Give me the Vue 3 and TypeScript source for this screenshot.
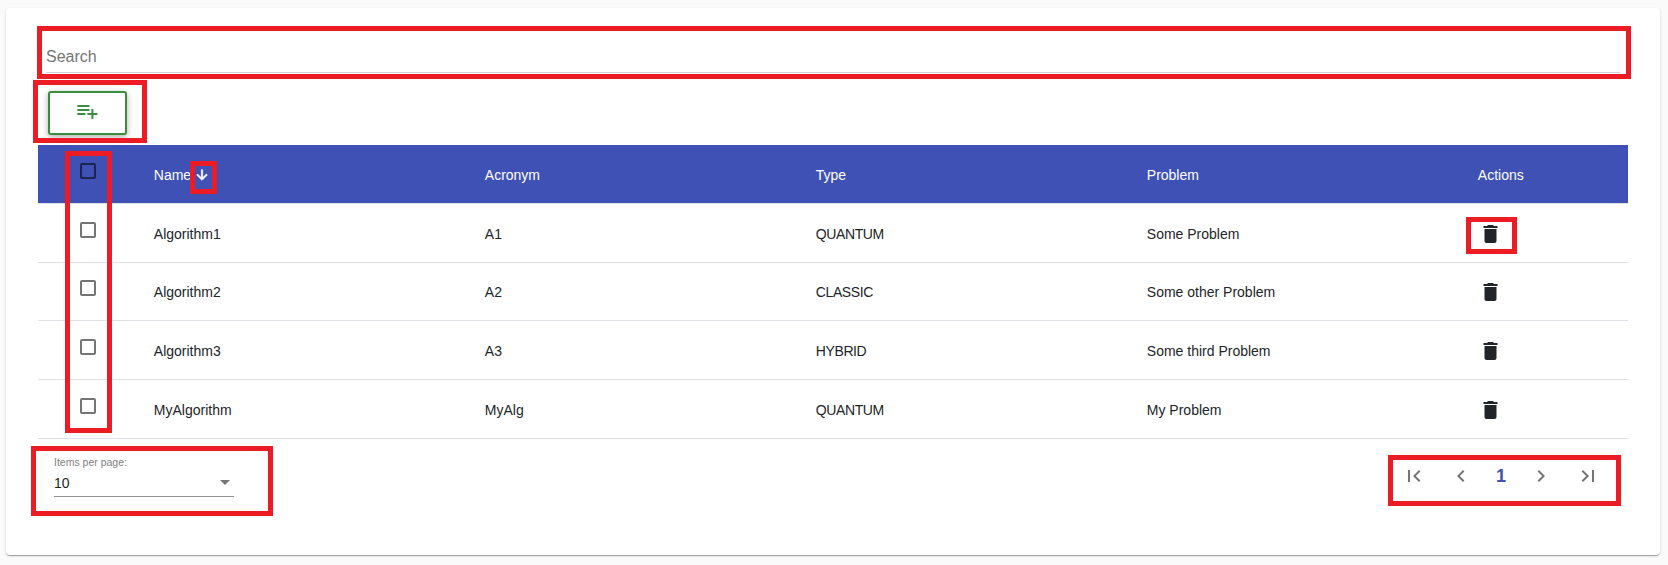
<script setup lang="ts">
import { ref } from 'vue'

interface Algorithm {
  name: string
  acronym: string
  type: string
  problem: string
}

const search = ref('')
const algorithms: Algorithm[] = [
  { name: 'Algorithm1', acronym: 'A1', type: 'QUANTUM', problem: 'Some Problem' },
  { name: 'Algorithm2', acronym: 'A2', type: 'CLASSIC', problem: 'Some other Problem' },
  { name: 'Algorithm3', acronym: 'A3', type: 'HYBRID', problem: 'Some third Problem' },
  { name: 'MyAlgorithm', acronym: 'MyAlg', type: 'QUANTUM', problem: 'My Problem' },
]
const marks = ['search', 'add', 'select', 'sort', 'delete', 'size', 'pages']
</script>

<template>
  <main class="page">
    <section class="card">
      <div class="search">
        <input v-model="search" type="text" placeholder="Search" />
      </div>

      <div class="toolbar">
        <button class="add" type="button" aria-label="Add">
          <svg class="icon" viewBox="-0.4 0 24 24"><path d="M14 10H2v2h12v-2zm0-4H2v2h12V6zm4 8v-4h-2v4h-4v2h4v4h2v-4h4v-2h-4zM2 16h8v-2H2v2z" /></svg>
        </button>
      </div>

      <div class="table">
        <div class="row head">
          <div class="check"><span class="box" /></div>
          <div class="cell">
            Name
            <svg class="sort" viewBox="0 0 24 24"><path d="M20 12l-1.41-1.41L13 16.17V4h-2v12.17l-5.58-5.59L4 12l8 8 8-8z" /></svg>
          </div>
          <div class="cell">Acronym</div>
          <div class="cell">Type</div>
          <div class="cell">Problem</div>
          <div class="cell">Actions</div>
        </div>
        <div v-for="item in algorithms" :key="item.name" class="row">
          <div class="check"><span class="box" /></div>
          <div class="cell">{{ item.name }}</div>
          <div class="cell">{{ item.acronym }}</div>
          <div class="cell type">{{ item.type }}</div>
          <div class="cell">{{ item.problem }}</div>
          <div class="cell">
            <svg class="icon" viewBox="-0.5 0 24 24"><path d="M6 19c0 1.1.9 2 2 2h8c1.1 0 2-.9 2-2V7H6v12zM19 4h-3.5l-1-1h-5l-1 1H5v2h14V4z" /></svg>
          </div>
        </div>
      </div>

      <footer class="footer">
        <div class="size">
          <span class="label">Items per page:</span>
          <div class="value"><span>10</span><i class="caret" /></div>
        </div>
        <nav class="pages">
          <svg class="icon" viewBox="0 0 24 24"><path d="M18.41 16.59L13.82 12l4.59-4.59L17 6l-6 6 6 6zM6 6h2v12H6z" /></svg>
          <svg class="icon prev" viewBox="0 0 24 24"><path d="M15.41 7.41L14 6l-6 6 6 6 1.41-1.41L10.83 12z" /></svg>
          <span class="current">1</span>
          <svg class="icon" viewBox="0 0 24 24"><path d="M10 6L8.59 7.41 13.17 12l-4.58 4.59L10 18l6-6z" /></svg>
          <svg class="icon last" viewBox="0 0 24 24"><path d="M5.59 7.41L10.18 12l-4.59 4.59L7 18l6-6-6-6zM16 6h2v12h-2z" /></svg>
        </nav>
      </footer>
    </section>

    <div v-for="mark in marks" :key="mark" class="mark" :class="'mark-' + mark" />
  </main>
</template>

<style>
html,
body {
  margin: 0;
  background: #fafafa;
}
</style>

<style scoped>
* {
  box-sizing: border-box;
}
.page {
  position: relative;
  height: 565px;
  padding: 8px 8px 10px 6px;
  overflow: hidden;
  font-family: "Liberation Sans", Arial, sans-serif;
  font-size: 14px;
  color: #212529;
}
.card {
  height: 547px;
  padding: 32px 32px 0;
  border-radius: 4px;
  background: #fff;
  box-shadow: 0 2px 1px -1px rgba(0, 0, 0, 0.2), 0 1px 1px rgba(0, 0, 0, 0.14), 0 1px 3px rgba(0, 0, 0, 0.12);
}
.icon {
  display: block;
  width: 24px;
  height: 24px;
  fill: currentColor;
}
.search {
  height: 33px;
  margin: 0 8px;
  border-bottom: 1px solid #ced4da;
}
.search input {
  display: block;
  width: 100%;
  height: 32px;
  padding: 2px 0 0;
  border: 0;
  outline: 0;
  background: none;
  font: 16px "Liberation Sans", Arial, sans-serif;
}
.search input::placeholder {
  color: #757575;
  opacity: 1;
}
.toolbar {
  height: 72px;
  padding: 18px 10px 0;
}
.add {
  display: flex;
  width: 79px;
  height: 44px;
  padding: 6px 25px;
  border: 2px solid #388e3c;
  border-radius: 3px;
  background: #fff;
  color: #388e3c;
  box-shadow: 0 2px 5px rgba(0, 0, 0, 0.2), 0 2px 10px rgba(0, 0, 0, 0.14);
}
.add .icon {
  flex: none;
}
.table {
  width: 1590px;
  border-bottom: 1px solid #dee2e6;
}
.row {
  display: grid;
  grid-template-columns: 104px 331px 331px 331px 331px 162px;
  height: 58.67px;
  border-top: 1px solid #dee2e6;
}
.head {
  height: 58px;
  border-top: 0;
  background: #3f51b5;
  color: #fff;
}
.check {
  padding: 17.7px 0 0 42px;
}
.box {
  display: block;
  width: 16px;
  height: 16px;
  border: 2px solid #757575;
  border-radius: 2px;
}
.head .box {
  border-color: #1c2452;
}
.cell {
  display: flex;
  align-items: center;
  padding: 1.8px 0 0 11.8px;
}
.type {
  letter-spacing: -0.4px;
}
.sort {
  width: 16px;
  height: 16px;
  margin: 1px 0 0 3px;
  fill: #fff;
  stroke: #fff;
  stroke-width: 1;
}
.footer {
  display: flex;
  justify-content: space-between;
  padding: 17px 28px 0 16px;
}
.size {
  width: 180px;
  height: 41px;
  border-bottom: 1px solid #949494;
}
.label {
  display: block;
  height: 15px;
  font-size: 10.5px;
  line-height: 12px;
  color: #808080;
}
.value {
  display: flex;
  justify-content: space-between;
  padding-right: 4px;
  line-height: 24px;
  color: #212121;
}
.caret {
  margin-top: 9px;
  height: 5px;
  border: 5px solid transparent;
  border-top-color: #757575;
  border-bottom: 0;
}
.pages {
  display: flex;
  padding-top: 8px;
  color: #757575;
}
.prev {
  margin-left: 23px;
}
.last {
  margin-left: 23px;
}
.current {
  width: 56px;
  text-align: center;
  font-size: 18px;
  font-weight: 700;
  line-height: 24px;
  color: #3f51b5;
}
/* Highlight frames laid over the controls */
.mark {
  position: absolute;
  border: 5px solid #ed1c24;
  pointer-events: none;
}
.mark-search { left: 37px; top: 26px; width: 1594px; height: 53px; }
.mark-add { left: 33px; top: 80px; width: 114px; height: 63px; }
.mark-select { left: 65px; top: 151px; width: 47px; height: 282px; }
.mark-sort { left: 190px; top: 161px; width: 27px; height: 33px; }
.mark-delete { left: 1466px; top: 217px; width: 51px; height: 37px; }
.mark-size { left: 31px; top: 446px; width: 242px; height: 70px; }
.mark-pages { left: 1388px; top: 455px; width: 233px; height: 51px; }
</style>
